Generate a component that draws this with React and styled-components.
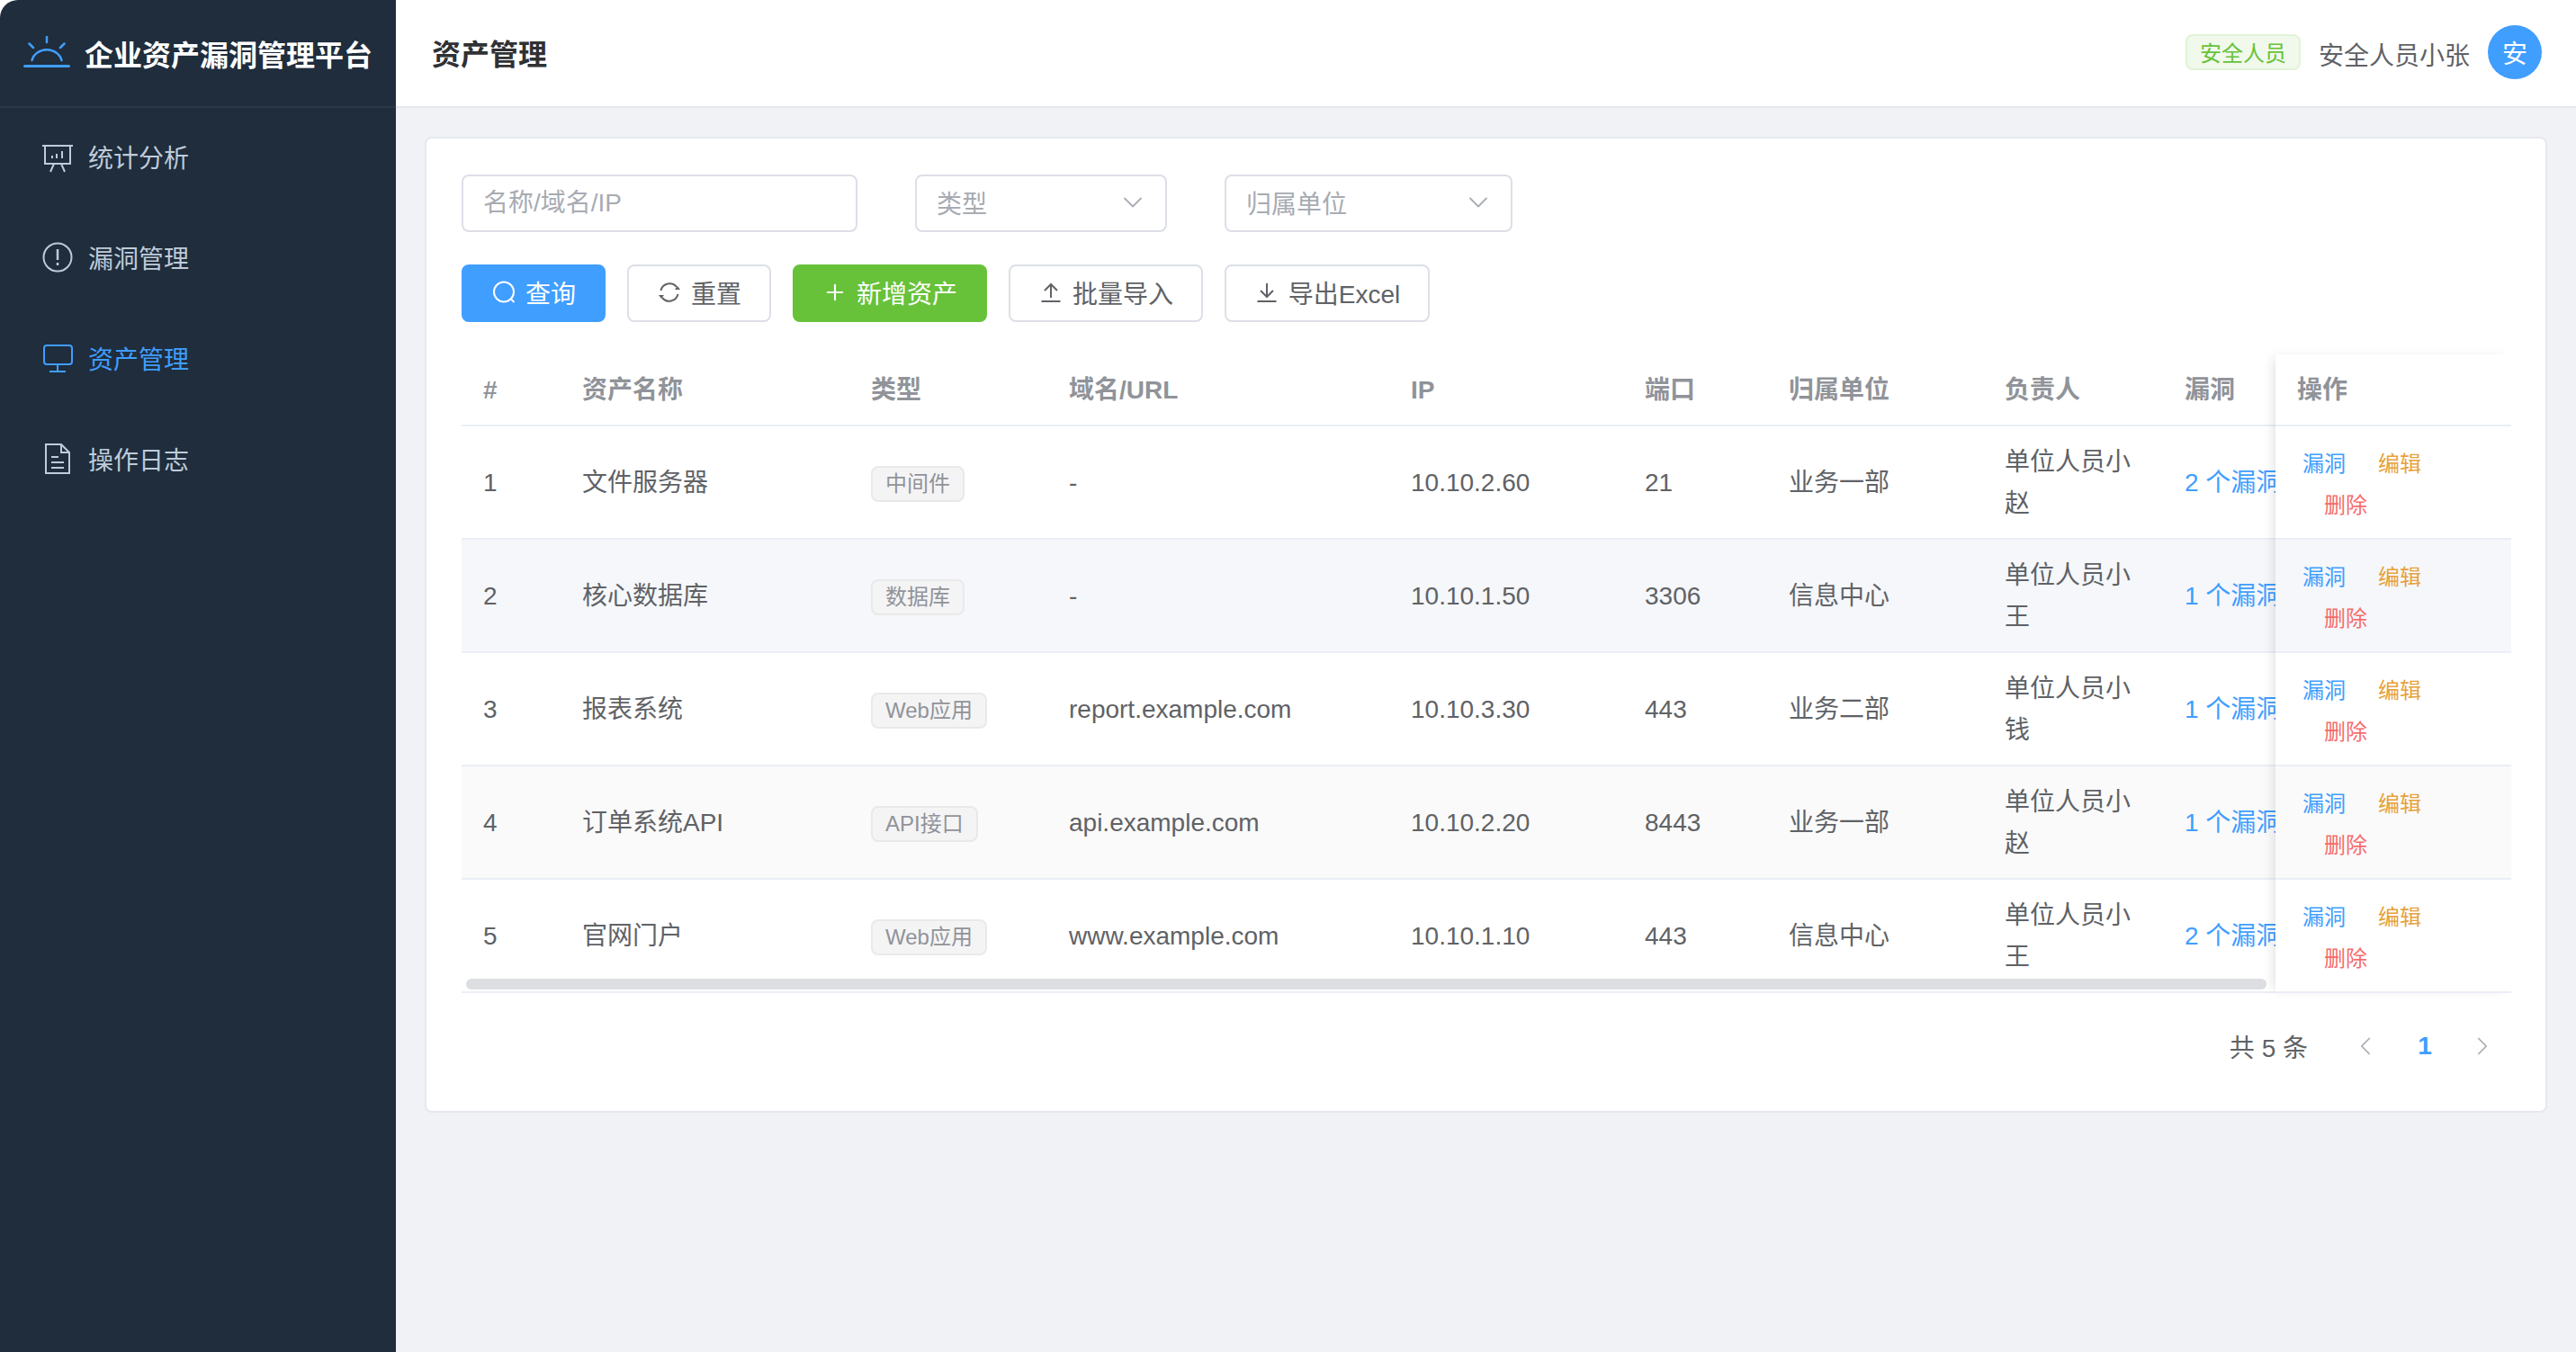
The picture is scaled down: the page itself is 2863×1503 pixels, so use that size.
import React from "react";
import styled, { createGlobalStyle } from "styled-components";
import { Plus, ChevronDown, ChevronLeft, ChevronRight } from "lucide-react";

const GlobalStyle = createGlobalStyle`
  html, body { margin: 0; padding: 0; background: #fff; }
  * { box-sizing: border-box; }
  body {
    font-family: "Liberation Sans", "Noto Sans CJK SC", sans-serif;
    font-size: 28px;
    color: #606266;
  }
`;

const Layout = styled.div`
  display: flex;
  width: 2863px;
  height: 1503px;
  overflow: hidden;
  border-radius: 20px 20px 0 0;
`;

const Sidebar = styled.aside`
  width: 440px;
  flex-shrink: 0;
  background: #1f2d3d;
`;

const Brand = styled.div`
  height: 120px;
  display: flex;
  align-items: center;
  gap: 16px;
  padding-left: 26px;
  border-bottom: 2px solid rgba(255, 255, 255, 0.05);
  color: #fff;
  font-size: 32px;
  font-weight: 700;
  white-space: nowrap;
`;

const NavItem = styled.div`
  height: 112px;
  padding-bottom: 4px;
  display: flex;
  align-items: center;
  gap: 16px;
  padding-left: 46px;
  color: ${p => (p.$active ? "#409eff" : "#bfcbd9")};
`;

const Main = styled.div`
  flex: 1;
  min-width: 0;
  display: flex;
  flex-direction: column;
  background: #f0f2f5;
`;

const Header = styled.header`
  height: 120px;
  flex-shrink: 0;
  display: flex;
  align-items: center;
  justify-content: space-between;
  padding: 0 38px 2px 40px;
  background: #fff;
  border-bottom: 2px solid #e6e8ee;
`;

const PageTitle = styled.div`
  font-size: 32px;
  font-weight: 600;
  color: #303133;
`;

const UserBox = styled.div`
  display: flex;
  align-items: center;
  gap: 20px;
`;

const RoleTag = styled.span`
  height: 40px;
  padding: 0 14px 2px;
  display: inline-flex;
  align-items: center;
  font-size: 24px;
  color: #67c23a;
  background: #f0f9eb;
  border: 2px solid #e1f3d8;
  border-radius: 8px;
`;

const UserName = styled.span`
  margin-top: 3px;
`;

const Avatar = styled.div`
  width: 60px;
  height: 60px;
  border-radius: 50%;
  display: flex;
  align-items: center;
  justify-content: center;
  background: #409eff;
  color: #fff;
`;

const Content = styled.main`
  padding: 32px;
`;

const Card = styled.section`
  height: 1085px;
  padding: 40px 38px 40px 39px;
  background: #fff;
  border: 2px solid #e6e8ee;
  border-radius: 8px;
`;

const Filters = styled.div`
  display: flex;
  gap: 64px;
  margin-bottom: 36px;
`;

const NameInput = styled.input`
  width: 440px;
  height: 64px;
  padding: 0 22px;
  font: inherit;
  color: #606266;
  border: 2px solid #dcdfe6;
  border-radius: 8px;
  outline: none;
  &::placeholder { color: #a8abb2; opacity: 1; }
`;

const Select = styled.div`
  width: ${p => p.$width}px;
  height: 64px;
  padding: 0 18px 2px 22px;
  display: flex;
  align-items: center;
  justify-content: space-between;
  color: #a8abb2;
  border: 2px solid #dcdfe6;
  border-radius: 8px;
`;

const Toolbar = styled.div`
  display: flex;
  gap: 24px;
  margin-bottom: 36px;
`;

const buttonColors = {
  primary: "background: #409eff; color: #fff; border-color: #409eff;",
  success: "background: #67c23a; color: #fff; border-color: #67c23a;",
  plain: "background: #fff; color: #606266; border-color: #dcdfe6;",
};

const Button = styled.button`
  width: ${p => p.$width}px;
  height: 64px;
  padding: 0 0 2px;
  display: inline-flex;
  align-items: center;
  justify-content: center;
  gap: 10px;
  font: inherit;
  border: 2px solid;
  border-radius: 8px;
  ${p => buttonColors[p.$kind || "plain"]}
`;

const TableWrap = styled.div`
  display: flex;
  align-items: flex-start;
`;

const ScrollPane = styled.div`
  position: relative;
  width: 2016px;
  flex-shrink: 0;
  overflow: hidden;
`;

const FixedPane = styled.div`
  position: relative;
  flex: 1;
  min-width: 0;
  background: #fff;
  box-shadow: -6px 0 12px -4px rgba(0, 0, 0, 0.12);
`;

const Row = styled.div`
  height: ${p => (p.$head ? 80 : 126)}px;
  display: ${p => (p.$fixed ? "block" : "grid")};
  grid-template-columns: 110px 321px 220px 380px 260px 160px 240px 200px 200px;
  width: ${p => (p.$fixed ? "auto" : "2091px")};
  background: ${p => p.$bg || "#fff"};
  border-bottom: 2px solid #ebeef5;
  ${p => p.$head && "color: #909399; font-weight: 700;"}
`;

const Cell = styled.div`
  padding: 2px 24px 0;
  min-width: 0;
  height: 100%;
  display: flex;
  align-items: center;
  line-height: 46px;
`;

const VulnLink = styled(Cell)`
  color: #409eff;
  white-space: nowrap;
`;

const TypeTag = styled.span`
  height: 40px;
  margin-top: 2px;
  padding: 0 14px;
  display: inline-flex;
  align-items: center;
  font-size: 24px;
  color: #909399;
  background: #f4f4f5;
  border: 2px solid #e9e9eb;
  border-radius: 8px;
  white-space: nowrap;
`;

const Actions = styled.div`
  padding: 6px 24px 0;
  height: 100%;
  display: flex;
  flex-wrap: wrap;
  align-content: center;
`;

const ActionLink = styled.span`
  padding: 0 6px;
  font-size: 24px;
  line-height: 46px;
  color: ${p => p.$color};
  & + & { margin-left: 24px; }
`;

const Thumb = styled.div`
  position: absolute;
  left: 5px;
  right: 10px;
  bottom: 4px;
  height: 12px;
  border-radius: 6px;
  background: #dcdee1;
`;

const Pagination = styled.div`
  margin-top: 27px;
  height: 64px;
  display: flex;
  align-items: center;
  justify-content: flex-end;
`;

const Total = styled.span`
  margin-right: 32px;
  white-space: pre;
`;

const PageBtn = styled.span`
  width: 64px;
  height: 64px;
  display: flex;
  align-items: center;
  justify-content: center;
  color: ${p => (p.$active ? "#409eff" : "#a8abb2")};
  font-weight: ${p => (p.$active ? 700 : 400)};
  margin-left: ${p => (p.$active ? 2 : 0)}px;
`;

const NavIcon = styled.svg`
  width: 36px;
  height: 36px;
  flex-shrink: 0;
  fill: none;
  stroke: currentColor;
  stroke-width: 2;
`;

const BtnIcon = styled.svg`
  width: 28px;
  height: 28px;
  flex-shrink: 0;
  fill: none;
  stroke: currentColor;
  stroke-width: 2;
`;

const SunLogo = () => (
  <svg width="52" height="38" viewBox="0 0 52 38" fill="none" stroke="#409eff" strokeWidth="2.5" strokeLinecap="round">
    <path d="M1.5 33.5h49" strokeWidth="3" />
    <path d="M9.5 27A17 15.5 0 0 1 42.5 27" />
    <path d="M26 1v6M6.5 8.5l4.5 4.5M45.5 8.5L41 13" />
  </svg>
);

const BoardIcon = () => (
  <NavIcon viewBox="0 0 36 36">
    <path d="M1 6h34M4 6v20h28V6M14 26l-4 9M22 26l4 9" />
    <path d="M12 17v3M17 15v5M23 12v8" />
  </NavIcon>
);

const WarnIcon = () => (
  <NavIcon viewBox="0 0 36 36">
    <circle cx="18" cy="18" r="15.5" />
    <path d="M18 9v12M18 24v3" strokeWidth="2.5" />
  </NavIcon>
);

const MonitorIcon = () => (
  <NavIcon viewBox="0 0 36 36">
    <rect x="3" y="4" width="31" height="21" rx="3" />
    <path d="M18 25v8M9 33h18" />
  </NavIcon>
);

const DocIcon = () => (
  <NavIcon viewBox="0 0 36 36">
    <path d="M5 2h17l9 9v23H5zM22 2v9h9" />
    <path d="M11 16h8M11 22h14M11 28h14" />
  </NavIcon>
);

const SearchIcon = () => (
  <BtnIcon viewBox="0 0 28 28">
    <circle cx="14" cy="13.5" r="11" />
    <path d="M22 21.5l3.5 3.5" />
  </BtnIcon>
);

const RefreshIcon = () => (
  <BtnIcon viewBox="0 0 28 28">
    <path d="M4.5 12A10 10 0 0 1 22 8" />
    <path d="M23.5 16A10 10 0 0 1 6 20" />
    <path d="M20 11h6l-3-4zM2 17h6l-3 4z" fill="currentColor" stroke="none" />
  </BtnIcon>
);

const UploadIcon = () => (
  <BtnIcon viewBox="0 0 28 28">
    <path d="M3.5 24h21M14 20V5M7 12l7-7 7 7" />
  </BtnIcon>
);

const DownloadIcon = () => (
  <BtnIcon viewBox="0 0 28 28">
    <path d="M3.5 24h21M14 4v15M7 12l7 7 7-7" />
  </BtnIcon>
);

const navItems = [
  { label: "统计分析", icon: <BoardIcon /> },
  { label: "漏洞管理", icon: <WarnIcon /> },
  { label: "资产管理", icon: <MonitorIcon />, active: true },
  { label: "操作日志", icon: <DocIcon /> },
];

const columns = ["#", "资产名称", "类型", "域名/URL", "IP", "端口", "归属单位", "负责人", "漏洞"];

const assets = [
  { id: 1, name: "文件服务器", type: "中间件", url: "-", ip: "10.10.2.60", port: 21, org: "业务一部", owner: "单位人员小赵", vuln: 2, bg: "#fff" },
  { id: 2, name: "核心数据库", type: "数据库", url: "-", ip: "10.10.1.50", port: 3306, org: "信息中心", owner: "单位人员小王", vuln: 1, bg: "#f5f7fa" },
  { id: 3, name: "报表系统", type: "Web应用", url: "report.example.com", ip: "10.10.3.30", port: 443, org: "业务二部", owner: "单位人员小钱", vuln: 1, bg: "#fff" },
  { id: 4, name: "订单系统API", type: "API接口", url: "api.example.com", ip: "10.10.2.20", port: 8443, org: "业务一部", owner: "单位人员小赵", vuln: 1, bg: "#fafafa" },
  { id: 5, name: "官网门户", type: "Web应用", url: "www.example.com", ip: "10.10.1.10", port: 443, org: "信息中心", owner: "单位人员小王", vuln: 2, bg: "#fff" },
];

export default function App() {
  return (
    <Layout>
      <GlobalStyle />
      <Sidebar>
        <Brand>
          <SunLogo />
          企业资产漏洞管理平台
        </Brand>
        {navItems.map(item => (
          <NavItem key={item.label} $active={item.active}>
            {item.icon}
            {item.label}
          </NavItem>
        ))}
      </Sidebar>
      <Main>
        <Header>
          <PageTitle>资产管理</PageTitle>
          <UserBox>
            <RoleTag>安全人员</RoleTag>
            <UserName>安全人员小张</UserName>
            <Avatar>安</Avatar>
          </UserBox>
        </Header>
        <Content>
          <Card>
            <Filters>
              <NameInput placeholder="名称/域名/IP" />
              <Select $width={280}>
                类型
                <ChevronDown size={36} strokeWidth={1.2} />
              </Select>
              <Select $width={320}>
                归属单位
                <ChevronDown size={36} strokeWidth={1.2} />
              </Select>
            </Filters>
            <Toolbar>
              <Button $kind="primary" $width={160}><SearchIcon />查询</Button>
              <Button $width={160}><RefreshIcon />重置</Button>
              <Button $kind="success" $width={216}><Plus size={28} strokeWidth={1.8} />新增资产</Button>
              <Button $width={216}><UploadIcon />批量导入</Button>
              <Button $width={228}><DownloadIcon />导出Excel</Button>
            </Toolbar>
            <TableWrap>
              <ScrollPane>
                <Row $head>
                  {columns.map(c => <Cell key={c}>{c}</Cell>)}
                </Row>
                {assets.map(a => (
                  <Row key={a.id} $bg={a.bg}>
                    <Cell>{a.id}</Cell>
                    <Cell>{a.name}</Cell>
                    <Cell><TypeTag>{a.type}</TypeTag></Cell>
                    <Cell>{a.url}</Cell>
                    <Cell>{a.ip}</Cell>
                    <Cell>{a.port}</Cell>
                    <Cell>{a.org}</Cell>
                    <Cell>{a.owner}</Cell>
                    <VulnLink>{a.vuln} 个漏洞</VulnLink>
                  </Row>
                ))}
                <Thumb />
              </ScrollPane>
              <FixedPane>
                <Row $head $fixed><Cell>操作</Cell></Row>
                {assets.map(a => (
                  <Row key={a.id} $fixed $bg={a.bg}>
                    <Actions>
                      <ActionLink $color="#409eff">漏洞</ActionLink>
                      <ActionLink $color="#e6a23c">编辑</ActionLink>
                      <ActionLink $color="#f56c6c">删除</ActionLink>
                    </Actions>
                  </Row>
                ))}
              </FixedPane>
            </TableWrap>
            <Pagination>
              <Total>共 5 条</Total>
              <PageBtn><ChevronLeft size={34} strokeWidth={1.2} /></PageBtn>
              <PageBtn $active>1</PageBtn>
              <PageBtn><ChevronRight size={34} strokeWidth={1.2} /></PageBtn>
            </Pagination>
          </Card>
        </Content>
      </Main>
    </Layout>
  );
}
